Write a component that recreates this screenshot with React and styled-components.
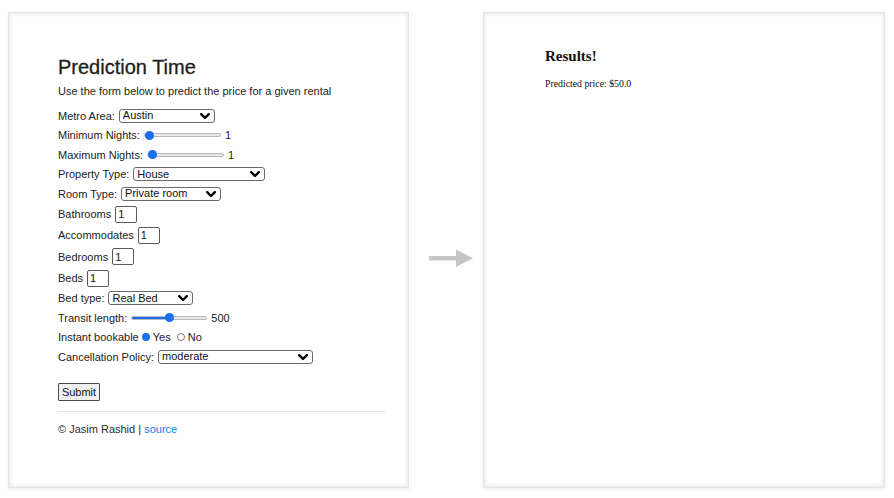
import React from "react";
import styled, { createGlobalStyle } from "styled-components";

const Global = createGlobalStyle`
  html, body { margin: 0; padding: 0; background: #ffffff; }
  body { font-family: "Liberation Sans", Arial, sans-serif; color: #222; }
  * { box-sizing: border-box; }
`;

const Page = styled.div`
  display: flex;
  align-items: flex-start;
  padding: 12px 0 0 8px;
  width: 894px;
  height: 498px;
`;

const Panel = styled.div`
  width: ${(p) => p.$w}px;
  height: 476px;
  background: #fff;
  border: 1px solid #e4e4e4;
  box-shadow: inset 0 0 3px 2px rgba(0, 0, 0, 0.07), 0 2px 4px rgba(0, 0, 0, 0.06);
  padding: ${(p) => p.$pad};
  flex-shrink: 0;
`;

const Gap = styled.div`
  width: 74px;
  height: 476px;
  display: flex;
  align-items: center;
  justify-content: center;
  flex-shrink: 0;
  padding-top: 16px;
  padding-left: 9px;
`;

const Title = styled.h1`
  margin: 0;
  font-size: 20px;
  font-weight: 400;
  line-height: 24px;
  color: #1e1e1e;
  -webkit-text-stroke: 0.3px #1e1e1e;
`;

const Lead = styled.p`
  margin: 5px 0 8px;
  font-size: 11px;
  line-height: 14px;
`;

const Form = styled.form`
  display: flex;
  flex-direction: column;
`;

const Row = styled.div`
  display: flex;
  align-items: center;
  gap: ${(p) => (p.$gap ? p.$gap : 4)}px;
  height: ${(p) => (p.$tall ? 21.3 : 19.5)}px;
  font-size: 11px;
  white-space: nowrap;
`;

const SelectWrap = styled.div`
  position: relative;
  width: ${(p) => p.$w}px;
  height: 14px;
`;

const Select = styled.select`
  appearance: none;
  -webkit-appearance: none;
  width: 100%;
  height: 14px;
  border: 1.5px solid #6a6a6a;
  border-radius: 3px;
  background: #fff;
  font-family: "Liberation Sans", Arial, sans-serif;
  font-size: 11px;
  line-height: 11px;
  color: #111;
  padding: 0 0 0 3px;
  margin: 0;
  outline: none;
`;

const Chevron = styled.svg`
  position: absolute;
  right: 5px;
  top: 4px;
  pointer-events: none;
`;

const Range = styled.input`
  appearance: none;
  -webkit-appearance: none;
  width: ${(p) => p.$w}px;
  height: 10px;
  margin: 0;
  background: transparent;
  &::-webkit-slider-runnable-track {
    height: 4px;
    border-radius: 2px;
    border: 1px solid #b9b9b9;
    background: var(--track);
  }
  &::-webkit-slider-thumb {
    -webkit-appearance: none;
    width: 9px;
    height: 9px;
    border-radius: 50%;
    background: #1a6ef2;
    margin-top: -3.5px;
    border: none;
  }
`;

const NumInput = styled.input`
  width: 22px;
  height: 17px;
  border: 1px solid #5a5a5a;
  border-radius: 2px;
  font-family: "Liberation Sans", Arial, sans-serif;
  font-size: 11px;
  padding: 0 0 0 2px;
  margin: 0;
  color: #111;
  outline: none;
  -moz-appearance: textfield;
  &::-webkit-inner-spin-button { -webkit-appearance: none; }
`;

const Radio = styled.input`
  appearance: none;
  -webkit-appearance: none;
  width: 8px;
  height: 8px;
  margin: 0 3px 0 0;
  border-radius: 50%;
  border: 1px solid #777;
  background: #fff;
  &:checked {
    border: none;
    background: #1a6ef2;
  }
`;

const RadioLabel = styled.label`
  display: inline-flex;
  align-items: center;
  margin-right: 3px;
`;

const Submit = styled.button`
  margin-top: 16px;
  align-self: flex-start;
  height: 18px;
  width: 42px;
  padding: 0;
  font-family: "Liberation Sans", Arial, sans-serif;
  font-size: 11px;
  color: #111;
  background: #f0f0f0;
  border: 1.5px solid #4a4a4a;
  border-radius: 1px;
`;

const Rule = styled.hr`
  border: none;
  height: 1px;
  background: #dedede;
  margin: 10px 0 0;
`;

const Footer = styled.p`
  margin: 10px 0 0;
  font-size: 11px;
  line-height: 14px;
  color: #2a2a2a;
`;

const Link = styled.a`
  color: #1a7ae6;
  text-decoration: none;
`;

const ResTitle = styled.h2`
  margin: 0;
  font-family: "Liberation Serif", "Times New Roman", serif;
  font-size: 15px;
  font-weight: 700;
  line-height: 18px;
  color: #111;
`;

const ResText = styled.p`
  margin: 13px 0 0;
  font-family: "Liberation Serif", "Times New Roman", serif;
  font-size: 9.8px;
  line-height: 12px;
  color: #111;
`;

const Dropdown = ({ w, value, options }) => (
  <SelectWrap $w={w}>
    <Select defaultValue={value}>
      {options.map((o) => (
        <option key={o}>{o}</option>
      ))}
    </Select>
    <Chevron width="10" height="7" viewBox="0 0 10 7">
      <polyline points="1.2,1.2 5,5 8.8,1.2" fill="none" stroke="#000" strokeWidth="2.4" strokeLinecap="round" strokeLinejoin="round" />
    </Chevron>
  </SelectWrap>
);

const Slider = ({ w, min, max, value }) => {
  const pct = ((value - min) / (max - min)) * 100;
  const track = `linear-gradient(to right, #1a6ef2 0%, #1a6ef2 ${pct}%, #e8e8e8 ${pct}%, #e8e8e8 100%)`;
  return (
    <Range
      type="range"
      $w={w}
      min={min}
      max={max}
      defaultValue={value}
      style={{ "--track": pct > 0 ? track : "#e8e8e8" }}
    />
  );
};

export default function App() {
  return (
    <>
      <Global />
      <Page>
        <Panel $w={401} $pad="42px 23px 0 49px">
          <Title>Prediction Time</Title>
          <Lead>Use the form below to predict the price for a given rental</Lead>
          <Form onSubmit={(e) => e.preventDefault()}>
            <Row>
              Metro Area:
              <Dropdown w={96} value="Austin" options={["Austin", "Boston", "Chicago"]} />
            </Row>
            <Row>
              Minimum Nights:
              <Slider w={77} min={1} max={30} value={1} />
              <span>1</span>
            </Row>
            <Row>
              Maximum Nights:
              <Slider w={77} min={1} max={30} value={1} />
              <span>1</span>
            </Row>
            <Row>
              Property Type:
              <Dropdown w={132} value="House" options={["House", "Apartment"]} />
            </Row>
            <Row>
              Room Type:
              <Dropdown w={100} value="Private room" options={["Private room", "Entire home/apt"]} />
            </Row>
            <Row $tall>
              Bathrooms
              <NumInput type="number" defaultValue={1} />
            </Row>
            <Row $tall>
              Accommodates
              <NumInput type="number" defaultValue={1} />
            </Row>
            <Row $tall>
              Bedrooms
              <NumInput type="number" defaultValue={1} />
            </Row>
            <Row $tall>
              Beds
              <NumInput type="number" defaultValue={1} />
            </Row>
            <Row>
              Bed type:
              <Dropdown w={85} value="Real Bed" options={["Real Bed", "Futon"]} />
            </Row>
            <Row>
              Transit length:
              <Slider w={76} min={0} max={1000} value={500} />
              <span>500</span>
            </Row>
            <Row $gap={3}>
              Instant bookable
              <RadioLabel>
                <Radio type="radio" name="ib" defaultChecked />
                Yes
              </RadioLabel>
              <RadioLabel>
                <Radio type="radio" name="ib" />
                No
              </RadioLabel>
            </Row>
            <Row>
              Cancellation Policy:
              <Dropdown w={155} value="moderate" options={["moderate", "strict", "flexible"]} />
            </Row>
            <Submit type="submit">Submit</Submit>
          </Form>
          <Rule />
          <Footer>
            © Jasim Rashid | <Link href="#">source</Link>
          </Footer>
        </Panel>
        <Gap>
          <svg width="48" height="22" viewBox="0 0 48 22">
            <defs>
              <filter id="blur" x="-20%" y="-40%" width="140%" height="180%">
                <feGaussianBlur stdDeviation="0.6" />
              </filter>
            </defs>
            <g filter="url(#blur)" fill="#c6c6c6">
              <rect x="2" y="9" width="30" height="4.5" rx="1" />
              <polygon points="29,2.5 46,11.2 29,20" />
            </g>
          </svg>
        </Gap>
        <Panel $w={402} $pad="34px 20px 0 61px">
          <ResTitle>Results!</ResTitle>
          <ResText>Predicted price: $50.0</ResText>
        </Panel>
      </Page>
    </>
  );
}
